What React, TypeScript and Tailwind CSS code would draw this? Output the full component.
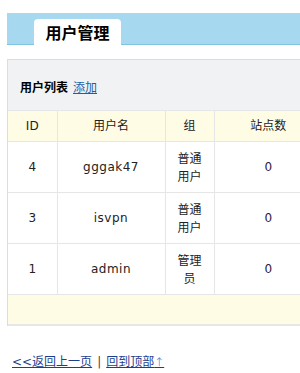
import React from "react";

const rows = [
  { id: "4", name: "gggak47", group: "普通用户", sites: "0" },
  { id: "3", name: "isvpn", group: "普通用户", sites: "0" },
  { id: "1", name: "admin", group: "管理员", sites: "0" },
];

export default function App() {
  return (
    <div
      className="w-[300px] h-[373px] overflow-hidden bg-white text-[12px] text-[#222]"
      style={{ fontFamily: '"DejaVu Sans", "Noto Sans CJK SC", sans-serif' }}
    >
      <div className="pl-[7px] pt-[13px]">
        <div className="w-[320px] h-[32px] bg-[#a6d8ef] border-b border-[#80c4e2] flex items-end pl-[27px]">
          <div
            className="w-[87px] h-[26px] -mb-px bg-white rounded-t-[4px] flex items-center justify-center font-bold text-[16px] text-black"
            style={{ fontFamily: '"Noto Sans CJK SC", sans-serif' }}
          >
            用户管理
          </div>
        </div>
      </div>

      <div className="ml-[7px] mt-[14px] w-[330px] border-l border-[#dcdde0]">
        <div className="h-[51px] bg-[#f1f2f4] border-t border-[#dcdde0] flex items-center pl-[12px] pt-[3px]">
          <span
            className="font-bold text-black"
            style={{ fontFamily: '"Noto Sans CJK SC", sans-serif' }}
          >
            用户列表
          </span>
          <a
            className="ml-[5px] text-[#1d5fa8] underline"
            style={{ fontFamily: '"Noto Sans CJK SC", sans-serif' }}
          >
            添加
          </a>
        </div>
        <table className="table-fixed border-collapse w-[314px]">
          <colgroup>
            <col className="w-[49px]" />
            <col className="w-[108px]" />
            <col className="w-[49px]" />
            <col className="w-[108px]" />
          </colgroup>
          <thead>
            <tr className="h-[31px] bg-[#fffce6] border-y border-[#e6e6e6]">
              <th className="font-normal text-center border-r border-[#e6e6e6]">ID</th>
              <th className="font-normal text-center border-r border-[#e6e6e6]">用户名</th>
              <th className="font-normal text-center border-r border-[#e6e6e6]">组</th>
              <th className="font-normal text-center">站点数</th>
            </tr>
          </thead>
          <tbody>
            {rows.map((r) => (
              <tr key={r.id} className="h-[51px] bg-white border-b border-[#e6e6e6]">
                <td className="text-center border-r border-[#e6e6e6]">{r.id}</td>
                <td className="text-center border-r border-[#e6e6e6] tracking-[0.5px]">{r.name}</td>
                <td
                  className="text-center border-r border-[#e6e6e6] px-[8px] leading-[18px]"
                  style={{ fontFamily: '"Noto Sans CJK SC", sans-serif' }}
                >
                  {r.group}
                </td>
                <td className="text-center text-[#2e1a47]">{r.sites}</td>
              </tr>
            ))}
            <tr className="h-[30px] bg-[#fffce6] border-b-2 border-[#e6e6e6]">
              <td colSpan={4}></td>
            </tr>
          </tbody>
        </table>
      </div>

      <div className="mt-[27px] pl-[12px] leading-[18px] text-[12px]">
        <a className="text-[#1c3f8f] underline">&lt;&lt;返回上一页</a>
        <span className="text-[#6b2a4a] mx-[5px]">|</span>
        <a className="text-[#1c3f8f] underline">
          回到顶部
          <span
            className="text-[#5a8fd0] text-[10px]"
            style={{ fontFamily: '"Noto Sans CJK SC", sans-serif' }}
          >
            ↑
          </span>
        </a>
      </div>
    </div>
  );
}
